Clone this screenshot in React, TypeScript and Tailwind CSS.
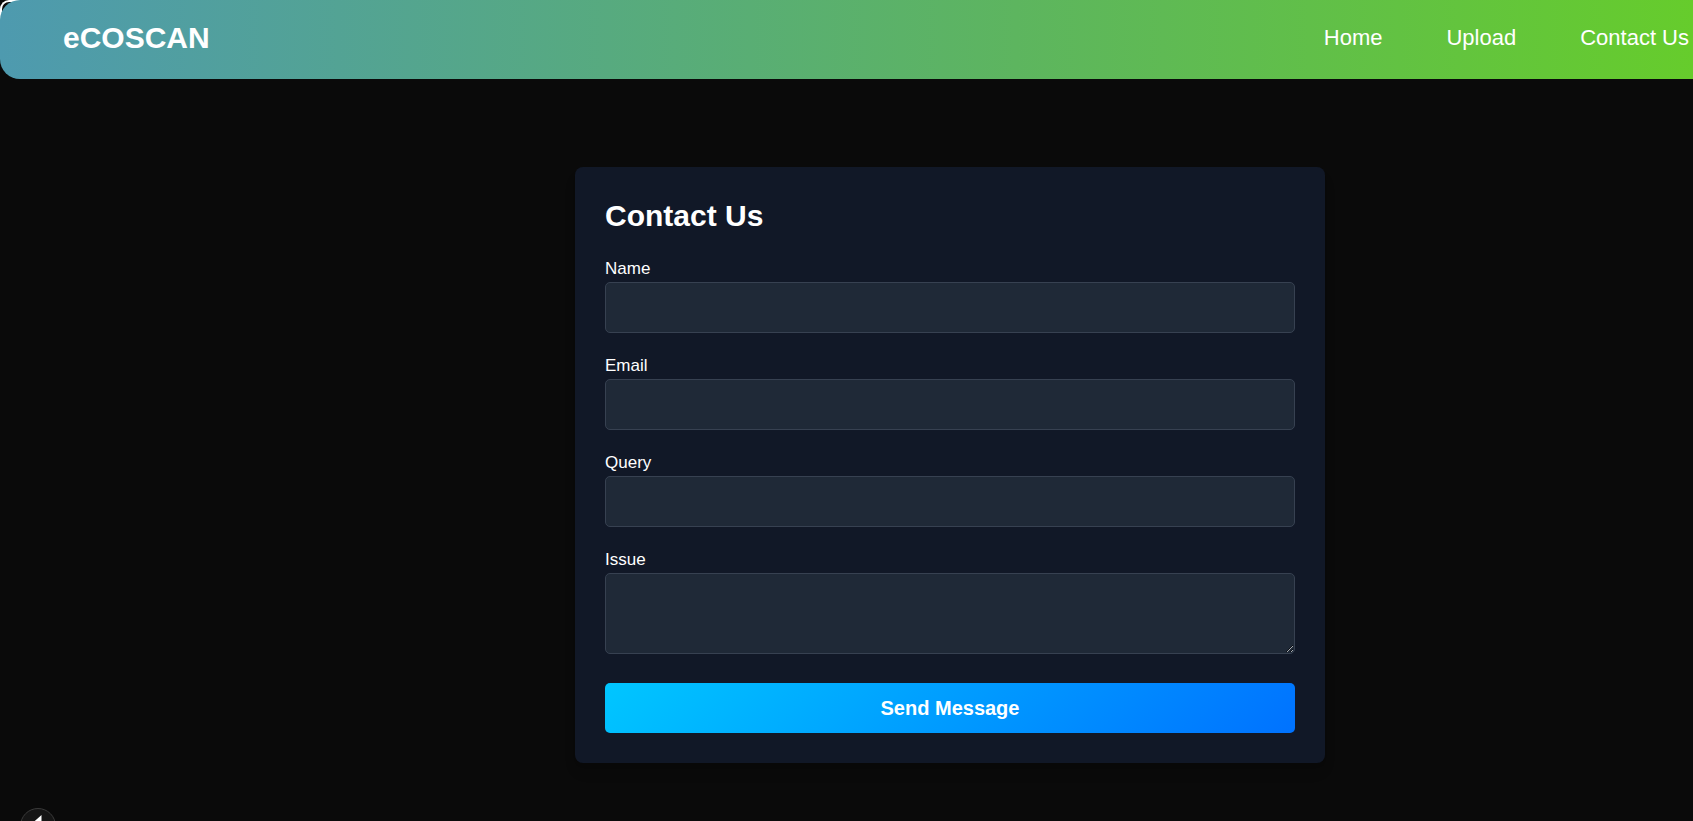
import React from 'react';

const FIELDS = [
    { id: 'name', label: 'Name', type: 'text' },
    { id: 'email', label: 'Email', type: 'email' },
    { id: 'query', label: 'Query', type: 'text' },
];

function Header() {
    return (
        <header className="relative z-10 flex h-[79px] w-full items-center justify-between rounded-l-[20px] bg-[linear-gradient(to_right,#4e9aaf,#5db55f_60%,#66cc2c)] pb-[4px] pl-[63px] pr-[4px] text-white">
            <div className="text-[30px] font-bold leading-none">eCOSCAN</div>
            <nav className="flex items-center gap-[64px] text-[22px] leading-none">
                <a href="#">Home</a>
                <a href="#">Upload</a>
                <a href="#">Contact Us</a>
            </nav>
        </header>
    );
}

function ContactForm() {
    return (
        <form
            className="w-[750px] rounded-[8px] bg-[#111827] px-[30px] pb-[30px] pt-[32px] shadow-lg"
            onSubmit={(e) => e.preventDefault()}
        >
            <h2 className="mb-[26px] text-[30px] font-bold leading-[34px] text-white">Contact Us</h2>

            {FIELDS.map((field) => (
                <div key={field.id} className="mb-[23px]">
                    <label htmlFor={field.id} className="mb-[3px] block text-[17px] leading-[20px] text-white">
                        {field.label}
                    </label>
                    <input
                        id={field.id}
                        type={field.type}
                        className="block h-[51px] w-full rounded-[5px] border border-[#374151] bg-[#1f2937] px-3 text-[17px] text-white outline-none"
                    />
                </div>
            ))}

            <div>
                <label htmlFor="issue" className="mb-[3px] block text-[17px] leading-[20px] text-white">
                    Issue
                </label>
                <textarea
                    id="issue"
                    className="block h-[81px] w-full rounded-[5px] border border-[#374151] bg-[#1f2937] px-3 py-2 text-[17px] text-white outline-none"
                />
            </div>

            <button
                type="submit"
                className="mt-[29px] block h-[50px] w-full rounded-[5px] bg-[linear-gradient(135deg,#00c6ff,#0072ff)] text-[20px] font-bold text-white"
            >
                Send Message
            </button>
        </form>
    );
}

export default function App() {
    return (
        <div
            className="relative min-h-[821px] w-full overflow-hidden bg-[#0a0a0a]"
            style={{ fontFamily: '"Liberation Sans", Arial, sans-serif' }}
        >
            {/* contorno branco atrás do canto do header */}
            <div className="absolute left-0 top-0 h-[30px] w-[30px] rounded-tl-[9px] border-l-2 border-t-2 border-white" />

            <Header />

            <main className="flex w-[1900px] justify-center pt-[88px]">
                <ContactForm />
            </main>

            {/* indicador de dev no canto */}
            <div className="absolute left-[20px] top-[808px] h-[36px] w-[36px] rounded-full border border-[#3a3a3a] bg-[#151515]">
                <svg width="36" height="36" viewBox="0 0 36 36" className="absolute -left-px -top-px">
                    <path d="M21.5 7 L21.5 24 L15 24 L15 19 L8 19 Z" fill="white" />
                </svg>
            </div>
        </div>
    );
}
